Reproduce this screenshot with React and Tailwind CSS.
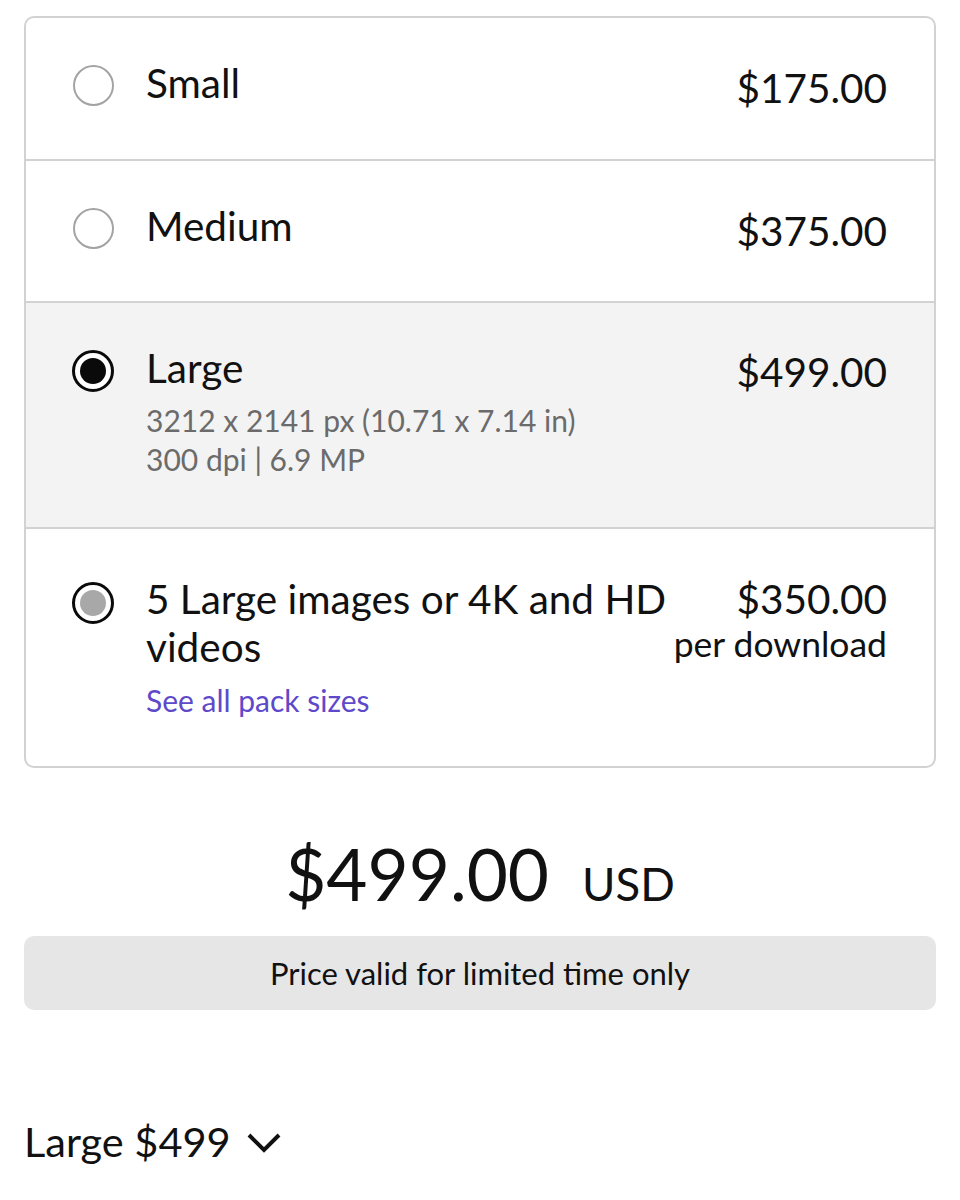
import React from "react";

function Radio({ state }) {
  if (state === "off") {
    return <div className="w-[41px] h-[41px] shrink-0 rounded-full border-2 border-[#a3a3a3] bg-white" />;
  }
  return (
    <div className="w-[42px] h-[42px] shrink-0 rounded-full border-[3px] border-[#0a0a0a] bg-white flex items-center justify-center">
      <div className={state === "on" ? "w-[26px] h-[26px] rounded-full bg-[#0a0a0a]" : "w-[26px] h-[26px] rounded-full bg-[#a8a8a8]"} />
    </div>
  );
}

export default function App() {
  return (
    <div className="w-[960px] h-[1200px] bg-white text-[#111] font-['Lato',sans-serif] pt-[16px] px-[24px]">
      <div className="border-2 border-[#d2d2d2] rounded-[10px] overflow-hidden">
        {/* Small */}
        <div className="h-[143px] border-b-2 border-[#d2d2d2] pt-[41px] pl-[47px] pr-[47px] flex items-start">
          <div className="mt-[6px]"><Radio state="off" /></div>
          <div className="ml-[32px] flex-1 text-[40.5px] leading-[48px]">Small</div>
          <div className="mt-[5px] text-[40.5px] leading-[48px]">$175.00</div>
        </div>
        {/* Medium */}
        <div className="h-[142px] border-b-2 border-[#d2d2d2] pt-[41px] pl-[47px] pr-[47px] flex items-start">
          <div className="mt-[6px]"><Radio state="off" /></div>
          <div className="ml-[32px] flex-1 text-[40.5px] leading-[48px]">Medium</div>
          <div className="mt-[5px] text-[40.5px] leading-[48px]">$375.00</div>
        </div>
        {/* Large */}
        <div className="h-[226px] border-b-2 border-[#d2d2d2] bg-[#f3f3f3] pt-[41px] pl-[46px] pr-[47px] flex items-start">
          <div className="mt-[6px]"><Radio state="on" /></div>
          <div className="ml-[32px] flex-1">
            <div className="text-[40.5px] leading-[48px]">Large</div>
            <div className="mt-[9px] text-[30px] leading-[39px] text-[#6b6b6b]">
              <div>3212 x 2141 px (10.71 x 7.14 in)</div>
              <div>300 dpi | 6.9 MP</div>
            </div>
          </div>
          <div className="mt-[4px] text-[40.5px] leading-[48px]">$499.00</div>
        </div>
        {/* Pack */}
        <div className="h-[237px] pt-[46px] pl-[46px] pr-[47px] flex items-start">
          <div className="mt-[7px]"><Radio state="pack" /></div>
          <div className="ml-[32px] flex-1 min-w-0">
            <div className="text-[40.5px] leading-[48px]">5 Large images or 4K and HD videos</div>
            <div className="mt-[9px] text-[30px] leading-[40px] text-[#5d49c9]">See all pack sizes</div>
          </div>
          <div className="shrink-0 text-right">
            <div className="text-[40.5px] leading-[48px]">$350.00</div>
            <div className="mt-[1px] text-[35.5px] leading-[40px]">per download</div>
          </div>
        </div>
      </div>

      <div className="mt-[64px] flex items-baseline justify-center">
        <span className="text-[71px] leading-[84px]">$499.00</span>
        <span className="ml-[33px] text-[45.5px] leading-[52px]">USD</span>
      </div>

      <div className="mt-[20px] h-[74px] rounded-[10px] bg-[#e6e6e6] flex items-center justify-center text-[31px] leading-[40px]">
        Price valid for limited time only
      </div>

      <div className="mt-[107px] flex items-center">
        <span className="text-[41.5px] leading-[48px]">Large $499</span>
        <svg className="ml-[15px] mt-[4px]" width="36" height="24" viewBox="0 0 36 24" fill="none">
          <path d="M3 4 L18 19 L33 4" stroke="#111" strokeWidth="4" strokeLinejoin="miter" />
        </svg>
      </div>
    </div>
  );
}
